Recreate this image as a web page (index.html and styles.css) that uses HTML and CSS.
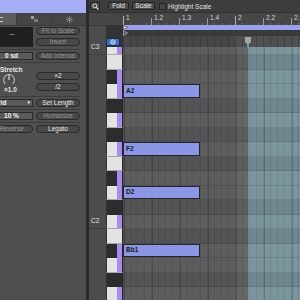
FILE: index.html
```html
<!DOCTYPE html>
<html>
    <head>
        <title>MIDI Clip Editor</title>
        <link rel="stylesheet" href="styles.css">
    </head>
    <body>
        <div class="side">
            <div class="side-title"></div>
            <div class="tabs">
                <div class="tab active"><span class="tab-lines"></span></div>
                <div class="tab">
                    <svg width="7" height="6" viewBox="0 0 7 6"><rect x="0" y="0" width="3" height="3" fill="#9a9a9a"/><rect x="3" y="3" width="4" height="3" fill="#7a7a7a"/></svg>
                </div>
                <div class="tab">
                    <svg width="7" height="7" viewBox="0 0 7 7"><path d="M3.5 0v7M0 3.5h7M1 1l5 5M6 1l-5 5" stroke="#8a8a8a" stroke-width="0.8"/></svg>
                </div>
            </div>

            <div class="tools">
                <div class="tool-row">
                    <div class="chord-box">---</div>
                    <div class="stack">
                        <div class="pill dim">Fit to Scale</div>
                        <div class="pill dim">Invert</div>
                    </div>
                </div>
                <div class="sep"></div>
                <div class="tool-row">
                    <div class="field">0 sd</div>
                    <div class="pill dim">Add Interval</div>
                </div>
                <div class="sep"></div>
                <div class="tool-row">
                    <div class="stretch">
                        <div class="stretch-label">Stretch</div>
                        <svg class="knob" width="14" height="14" viewBox="0 0 14 14">
                            <path d="M3.2 10.8 A5.4 5.4 0 1 1 10.8 10.8" fill="none" stroke="#bdbdbd" stroke-width="1.1"/>
                            <path d="M7 7 V1.6" stroke="#e0e0e0" stroke-width="1.1"/>
                        </svg>
                        <div class="stretch-value">×1.0</div>
                    </div>
                    <div class="stack low">
                        <div class="pill">×2</div>
                        <div class="pill">/2</div>
                    </div>
                </div>
                <div class="sep"></div>
                <div class="tool-row">
                    <div class="field select"><span>Grid</span><span class="arrow">▼</span></div>
                    <div class="pill">Set Length</div>
                </div>
                <div class="sep"></div>
                <div class="tool-row">
                    <div class="field">10 %</div>
                    <div class="pill dim">Humanize</div>
                </div>
                <div class="sep"></div>
                <div class="tool-row">
                    <div class="pill dim">Reverse</div>
                    <div class="pill">Legato</div>
                </div>
            </div>
        </div>

        <div class="divider"></div>

        <div class="editor">
            <div class="toolbar">
                <div class="tb-btn search">
                    <svg width="7" height="7" viewBox="0 0 7 7"><circle cx="2.8" cy="2.8" r="2" fill="none" stroke="#d8d8d8" stroke-width="1"/><path d="M4.3 4.3 L6.5 6.5" stroke="#d8d8d8" stroke-width="1.2"/></svg>
                </div>
                <div class="tb-btn fold">Fold</div>
                <div class="tb-btn scale">Scale</div>
                <div class="check"></div>
                <div class="tb-label">Highlight Scale</div>
            </div>

            <div class="main">
                <!-- note names column -->
                <div class="names">
                    <div class="ruler-left"></div>
                    <div class="names-body">
                        <div class="name-list">
                            <div class="name c">C3</div>
                            <div class="name"></div><div class="name"></div><div class="name"></div>
                            <div class="name"></div><div class="name"></div><div class="name"></div>
                            <div class="name"></div><div class="name"></div><div class="name"></div>
                            <div class="name"></div><div class="name"></div>
                            <div class="name c">C2</div>
                            <div class="name"></div><div class="name"></div><div class="name"></div>
                            <div class="name"></div><div class="name"></div><div class="name"></div>
                        </div>
                    </div>
                </div>

                <div class="piano">
                    <div class="header">
                        <div class="head-left">
                            <div class="ruler-left"></div>
                            <div class="key-head">
                                <div class="fold-btn">
                                    <svg width="6" height="6" viewBox="0 0 6 6"><circle cx="3" cy="3" r="2.2" fill="none" stroke="#e8eefc" stroke-width="1"/><circle cx="3" cy="3" r="0.8" fill="#e8eefc"/></svg>
                                </div>
                            </div>
                        </div>
                        <div class="head-right">
                            <div class="ruler">
                                <div class="beat bar">1</div>
                                <div class="beat">1.2</div>
                                <div class="beat">1.3</div>
                                <div class="beat">1.4</div>
                                <div class="beat bar">2</div>
                                <div class="beat">2.2</div>
                                <div class="beat">2.3</div>
                            </div>
                            <div class="loop-bar">
                                <svg width="5" height="5" viewBox="0 0 5 5"><path d="M0.5 0.5 L4.5 2.5 L0.5 4.5 Z" fill="#eef0ff" stroke="#303030" stroke-width="0.6"/></svg>
                            </div>
                            <div class="start-lane">
                                <svg width="5" height="6" viewBox="0 0 5 6"><path d="M0.5 0.5 L4.5 3 L0.5 5.5 Z" fill="#5a5a5a" stroke="#b8b8b8" stroke-width="0.7"/></svg>
                            </div>
                            <div class="marker-lane">
                                <div class="pin">
                                    <svg width="6" height="10" viewBox="0 0 6 10"><path d="M0 0 H6 V5 L3 8 L0 5 Z" fill="#a4a4a4"/><rect x="2" y="8" width="2" height="2" fill="#5fb9cf"/></svg>
                                </div>
                            </div>
                        </div>
                    </div>

                    <div class="roll">
                        <div class="rows">
                            <div class="row white in"><div class="key"></div><div class="lane"></div></div>
                            <div class="row white out"><div class="key"></div><div class="lane"></div></div>
                            <div class="row black in"><div class="key"></div><div class="lane"></div></div>
                            <div class="row white in"><div class="key"></div><div class="lane"><div class="note">A2</div></div></div>
                            <div class="row black out"><div class="key"></div><div class="lane"></div></div>
                            <div class="row white in"><div class="key"></div><div class="lane"></div></div>
                            <div class="row black out"><div class="key"></div><div class="lane"></div></div>
                            <div class="row white in"><div class="key"></div><div class="lane"><div class="note">F2</div></div></div>
                            <div class="row white out"><div class="key"></div><div class="lane"></div></div>
                            <div class="row black in"><div class="key"></div><div class="lane"></div></div>
                            <div class="row white in"><div class="key"></div><div class="lane"><div class="note">D2</div></div></div>
                            <div class="row black out"><div class="key"></div><div class="lane"></div></div>
                            <div class="row white in"><div class="key"></div><div class="lane"></div></div>
                            <div class="row white out"><div class="key"></div><div class="lane"></div></div>
                            <div class="row black in"><div class="key"></div><div class="lane"><div class="note">Bb1</div></div></div>
                            <div class="row white in"><div class="key"></div><div class="lane"></div></div>
                            <div class="row black out"><div class="key"></div><div class="lane"></div></div>
                            <div class="row white in"><div class="key"></div><div class="lane"></div></div>
                            <div class="row black out"><div class="key"></div><div class="lane"></div></div>
                        </div>
                    </div>
                </div>
            </div>
        </div>
    </body>
</html>
```

FILE: styles.css
```css
/* Clip editor: device panel on the left, piano roll on the right */
body {
    margin: 0;
    width: 300px;
    height: 300px;
    overflow: hidden;
    display: flex;
    background-color: #4e4e4e;
    font-family: "Liberation Sans", Arial, sans-serif;
    font-size: 6.5px;
    color: #dcdcdc;
}

/* ---------- left panel ---------- */
.side {
    width: 86px;
    flex: none;
    display: flex;
    flex-direction: column;
    overflow: hidden;
    background-color: #4f4f4f;
}

.side-title {
    height: 13px;
    background-color: #a5adf6;
}

.tabs {
    height: 12px;
    display: flex;
    background-color: #454545;
    border-bottom: 1px solid #393939;
}

.tab {
    display: flex;
    align-items: center;
    justify-content: center;
    border-right: 1px solid #3a3a3a;
}

.tab:nth-child(1) { width: 16px; justify-content: flex-start; }
.tab:nth-child(2) { width: 34px; }
.tab:nth-child(3) { flex: 1; border-right: none; }

.tab.active {
    background-color: #5d5d5d;
}

.tab-lines {
    width: 3px;
    height: 3px;
    border-top: 1px solid #c8c8c8;
    border-bottom: 1px solid #c8c8c8;
}

.tools {
    margin-left: -10px;
    padding: 1px 6px 0 0;
    display: flex;
    flex-direction: column;
}

.tool-row {
    display: grid;
    grid-template-columns: 43px 44px;
    column-gap: 3px;
    align-items: start;
}

.stack {
    display: flex;
    flex-direction: column;
    gap: 3px;
}

.stack.low {
    padding-top: 7px;
}

.sep {
    height: 1px;
    background-color: #3c3c3c;
    margin: 2px 0;
}

.pill {
    height: 8px;
    box-sizing: border-box;
    border: 1px solid #2a2a2a;
    border-radius: 4px;
    background-color: #484848;
    display: flex;
    align-items: center;
    justify-content: center;
    line-height: 1;
    color: #e4e4e4;
}

.pill.dim {
    color: #969696;
}

.chord-box {
    height: 20px;
    background-color: #1f1f1f;
    color: #b4b4b4;
    display: flex;
    justify-content: center;
    padding-top: 3px;
    box-sizing: border-box;
    letter-spacing: -0.5px;
}

.field {
    height: 8px;
    box-sizing: border-box;
    border: 1px solid #2a2a2a;
    background-color: #5a5a5a;
    display: flex;
    align-items: center;
    justify-content: center;
    line-height: 1;
    color: #f2f2f2;
    font-weight: bold;
}

.field.select {
    justify-content: space-between;
    padding: 0 1px 0 2px;
}

.arrow {
    font-size: 4.5px;
    font-weight: normal;
}

.stretch {
    padding-left: 10px;
    display: flex;
    flex-direction: column;
    align-items: flex-start;
    height: 29px;
}

.stretch-label {
    color: #e8e8e8;
    font-weight: bold;
    margin-top: 1px;
    line-height: 7px;
}

.knob {
    display: block;
    margin: 0 0 0 2px;
}

.stretch-value {
    margin-left: 4px;
    line-height: 6px;
    color: #e4e4e4;
    font-weight: bold;
}

.divider {
    width: 3px;
    flex: none;
    background-color: #2b2b2b;
}

/* ---------- editor ---------- */
.editor {
    flex: 1;
    display: flex;
    flex-direction: column;
    overflow: hidden;
}

.toolbar {
    height: 13px;
    flex: none;
    display: flex;
    align-items: center;
    background-color: #3d3d3d;
    padding-left: 1px;
    box-sizing: border-box;
    border-bottom: 1px solid #303030;
}

.tb-btn {
    height: 8px;
    box-sizing: border-box;
    border: 1px solid #242424;
    border-radius: 1px;
    background-color: #4c4c4c;
    display: flex;
    align-items: center;
    justify-content: center;
    color: #e6e6e6;
    line-height: 1;
}

.search { width: 10px; }
.fold { width: 21px; margin-left: 8px; }
.scale { width: 23px; margin-left: 3px; }

.check {
    width: 7px;
    height: 7px;
    box-sizing: border-box;
    border: 1px solid #262626;
    background-color: #474747;
    margin-left: 4px;
}

.tb-label {
    margin-left: 2px;
    color: #e0e0e0;
}

.main {
    flex: 1;
    display: flex;
    overflow: hidden;
}

/* note names */
.names {
    width: 17px;
    flex: none;
    display: flex;
    flex-direction: column;
    background-color: #4c4c4c;
}

.ruler-left {
    height: 12px;
    flex: none;
    background-color: #464646;
}

.names-body {
    flex: 1;
    overflow: hidden;
    border-top: 1px solid #3a3a3a;
}

.name-list {
    margin-top: 14.5px;
}

.name {
    height: 14.5px;
    box-sizing: border-box;
    color: #e0e0e0;
    display: flex;
    align-items: center;
    padding-left: 2px;
    line-height: 1;
}

.name.c {
    border-bottom: 1px solid #404040;
}

/* keys + lanes */
.piano {
    flex: 1;
    display: flex;
    flex-direction: column;
    overflow: hidden;
}

.header {
    height: 34px;
    flex: none;
    display: flex;
}

.head-left {
    width: 17px;
    flex: none;
    display: flex;
    flex-direction: column;
}

.key-head {
    flex: 1;
    background-color: #343434;
    display: flex;
    align-items: flex-end;
    padding-bottom: 1px;
}

.fold-btn {
    width: 14px;
    height: 8px;
    box-sizing: border-box;
    background-color: #3a6fcb;
    border: 1px solid #1d2c52;
    display: flex;
    align-items: center;
    justify-content: center;
}

.head-right {
    flex: 1;
    display: flex;
    flex-direction: column;
}

.ruler {
    height: 12px;
    display: flex;
    background-color: #464646;
}

.beat {
    width: 28px;
    flex: none;
    box-sizing: border-box;
    padding: 1px 0 0 3px;
    color: #d4d4d4;
    line-height: 7px;
    background:
        linear-gradient(#9a9a9a, #9a9a9a) 0 100% / 1px 7px no-repeat,
        repeating-linear-gradient(90deg, transparent 0 7px, #6c6c6c 7px 8px) 0 100% / 100% 2px no-repeat;
}

.beat.bar {
    background:
        linear-gradient(#b0b0b0, #b0b0b0) 0 100% / 1px 9px no-repeat,
        repeating-linear-gradient(90deg, transparent 0 7px, #6c6c6c 7px 8px) 0 100% / 100% 2px no-repeat;
}

.loop-bar {
    height: 5px;
    background-color: #98a1ee;
    display: flex;
}

.start-lane {
    height: 6px;
    background-color: #3a3a3a;
    display: flex;
}

.marker-lane {
    height: 11px;
    display: flex;
    background:
        repeating-linear-gradient(90deg, rgba(0, 0, 0, 0.18) 0 1px, transparent 1px 7px),
        linear-gradient(90deg, #474747 112px, #505050 112px);
}

.pin {
    margin: 1px 0 0 122px;
}

.roll {
    flex: 1;
    overflow: hidden;
}

.rows {
    margin-top: -6.5px;
}

.row {
    height: 14.5px;
    display: flex;
    --base: #5d5d5d;
    --band: #666666;
    --teal: #7b959c;
}

.row.out {
    --base: #545454;
    --band: #5c5c5c;
    --teal: #6f888f;
}

.key {
    width: 17px;
    flex: none;
    box-sizing: border-box;
    border-left: 1px solid #333333;
    border-right: 1px solid #262626;
}

.row.white .key {
    background-color: #e3e3e3;
    border-bottom: 1px solid #a8a8a8;
}

.row.black .key {
    background-color: #2c2c2c;
}

.row.in .key {
    background-image: linear-gradient(90deg, transparent 10px, #a68cf0 10px);
}

.lane {
    flex: 1;
    box-sizing: border-box;
    border-bottom: 1px solid rgba(0, 0, 0, 0.1);
    background:
        repeating-linear-gradient(90deg, transparent 0 1px, rgba(0, 0, 0, 0.2) 1px 2px, transparent 2px 28px),
        repeating-linear-gradient(90deg, rgba(0, 0, 0, 0.08) 0 1px, transparent 1px 7px),
        linear-gradient(90deg, var(--base) 113px, var(--band) 113px 125px, var(--teal) 125px);
}

.note {
    width: 77px;
    height: 100%;
    box-sizing: border-box;
    background-color: #8c96e6;
    border: 1px solid #262626;
    color: #1a1a1a;
    font-weight: bold;
    display: flex;
    align-items: center;
    padding-left: 2px;
    line-height: 1;
}
```
